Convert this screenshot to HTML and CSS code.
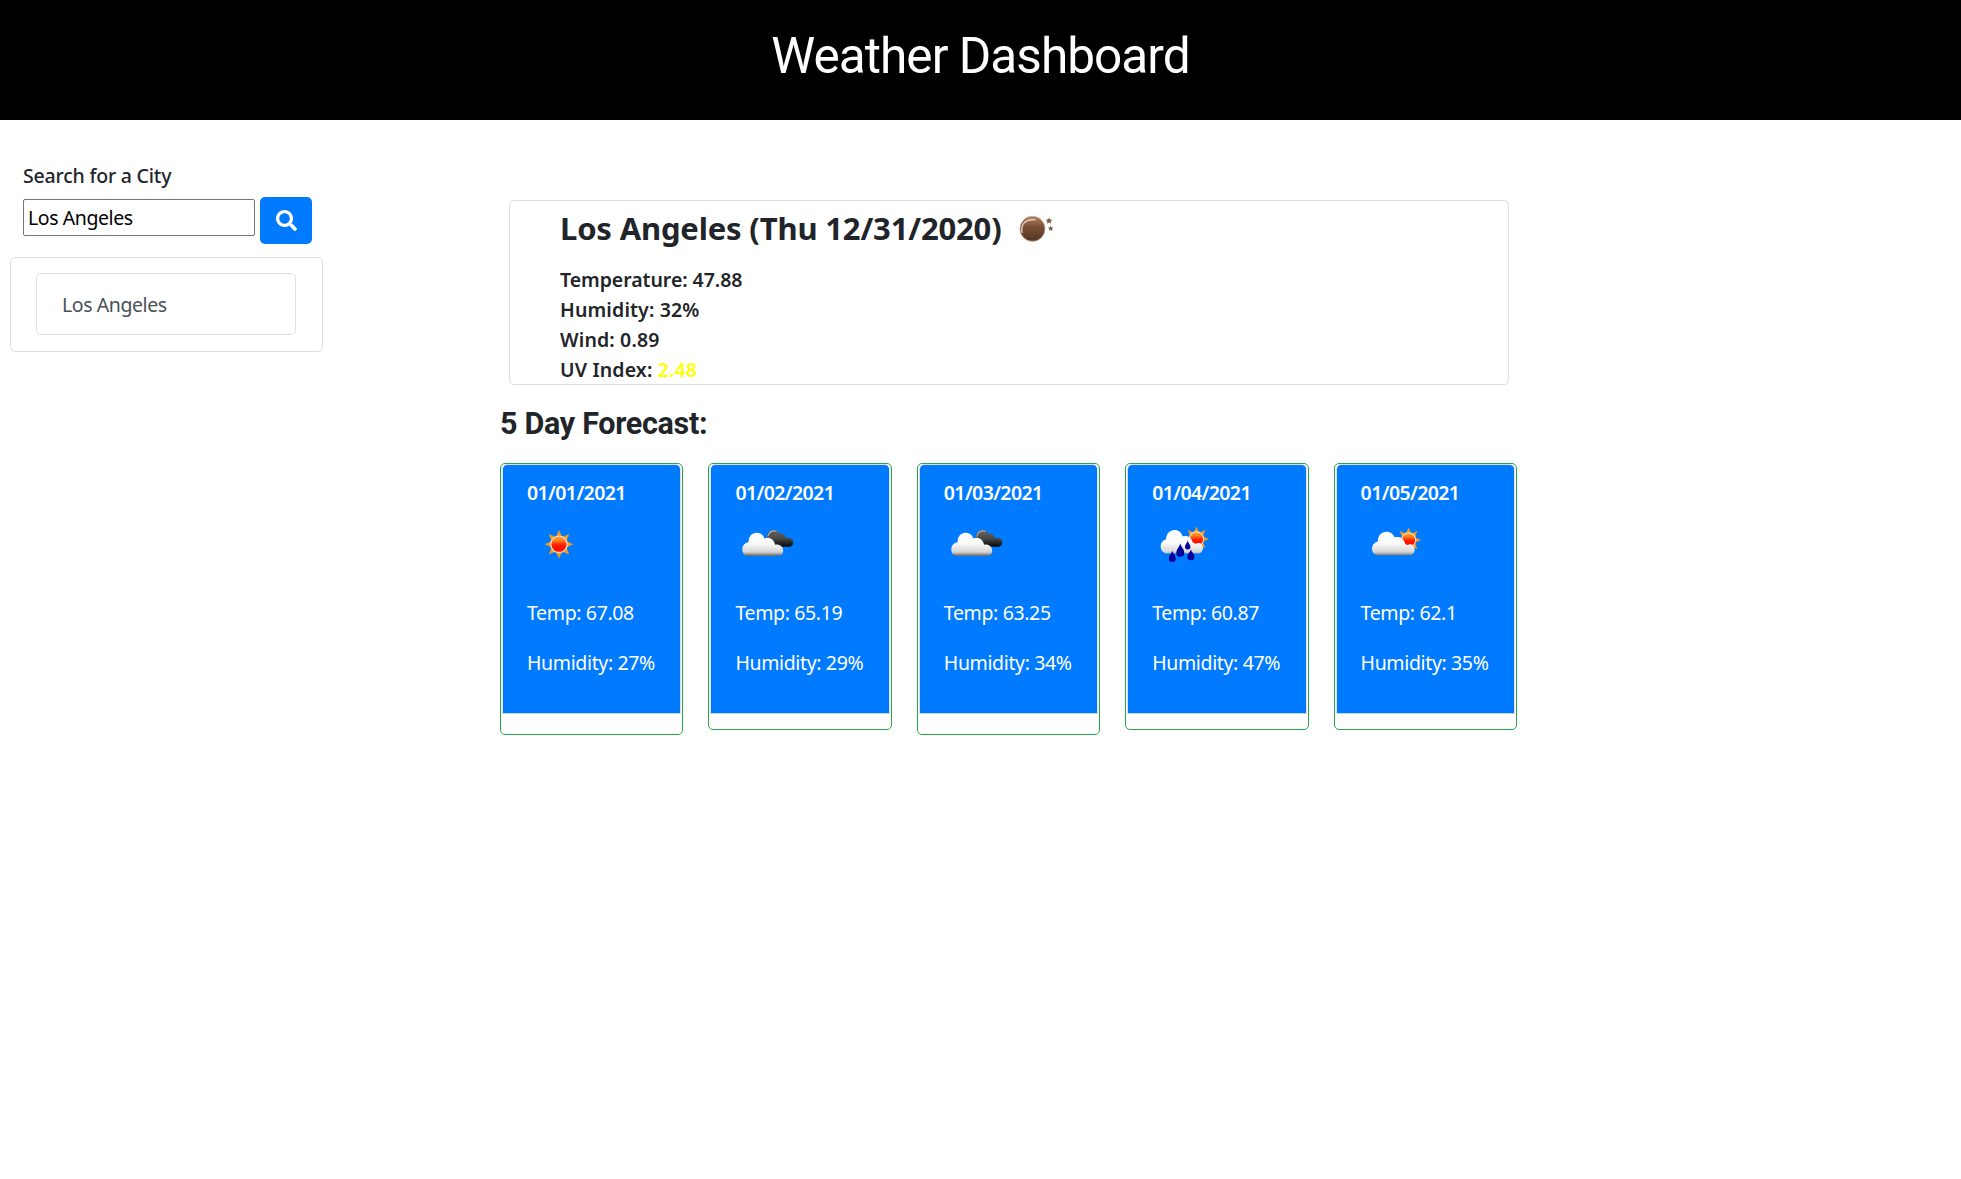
FILE: index.html
```html
<!DOCTYPE html>
<html lang="en">
<head>
<meta charset="utf-8">
<title>Weather Dashboard</title>
<link rel="stylesheet" href="styles.css">
</head>
<body>
<svg class="defs" aria-hidden="true">
  <defs>
    <linearGradient id="sun" x1="0" y1="0" x2="0" y2="1"><stop offset="0" stop-color="#ffa51e"/><stop offset=".25" stop-color="#ff8420"/><stop offset=".55" stop-color="#ff1a00"/><stop offset="1" stop-color="#ff0d00"/></linearGradient>
    <linearGradient id="cloud" gradientUnits="userSpaceOnUse" x1="0" y1="18" x2="0" y2="43"><stop offset="0" stop-color="#fff"/><stop offset=".5" stop-color="#fafafa"/><stop offset=".84" stop-color="#d5d5d5"/><stop offset="1" stop-color="#666"/></linearGradient>
    <linearGradient id="dark" gradientUnits="userSpaceOnUse" x1="0" y1="17" x2="0" y2="34"><stop offset="0" stop-color="#666"/><stop offset=".5" stop-color="#484848"/><stop offset="1" stop-color="#050505"/></linearGradient>
    <linearGradient id="moon" x1="0" y1="0" x2="0" y2="1"><stop offset="0" stop-color="#b57e5b"/><stop offset=".4" stop-color="#795136"/><stop offset="1" stop-color="#523624"/></linearGradient>
    <linearGradient id="drop" x1="0" y1="0" x2="1" y2="0"><stop offset="0" stop-color="#000068"/><stop offset=".5" stop-color="#0000bd"/><stop offset="1" stop-color="#000068"/></linearGradient>
    <symbol id="sunshape" viewBox="-15 -15 30 30">
      <path fill="#f39a1e" d="M0-14.3 3-7.6-3-7.6ZM0 14.3 3 7.6-3 7.6ZM-14.3 0-7.6 3-7.6-3ZM14.3 0 7.6 3 7.6-3ZM-10.3-10.3-7.4-3.4-3.4-7.4ZM10.3-10.3 7.4-3.4 3.4-7.4ZM-10.3 10.3-7.4 3.4-3.4 7.4ZM10.3 10.3 7.4 3.4 3.4 7.4Z"/>
      <circle r="8.2" fill="url(#sun)" stroke="#fbd9b4" stroke-width="1.3"/>
    </symbol>
    <symbol id="clouds" viewBox="0 0 62 62">
      <path fill="url(#dark)" d="M31 26C30 20 34 17 37.500 17 41 17 43 19 43.300 20.500 46.500 19.500 49.500 22 49.500 25 54 24 57.300 26.500 57.300 29.500 57.300 32 55.500 33.800 53 33.800H37Z"/>
      <path fill="none" stroke="#aaa" stroke-width="1.300" d="M32 23.500C32.500 19 36.500 16.800 40.500 18.300"/>
      <path fill="url(#cloud)" d="M12 43C8.500 43 6.300 40.500 6.300 36.500 6.300 32.500 9 29.500 12.500 29.200 12.500 23.500 16 19.700 20.500 19.700 24.500 19.700 27.500 22 28.300 25.500 32.500 23.500 38 26 39 31.700 43.500 31 47.200 33.500 47.200 37.500 47.200 41 45 43 42 43Z"/>
    </symbol>
  </defs>
</svg>
<header class="banner"><h1>Weather Dashboard</h1></header>
<div class="layout">
  <aside class="sidebar">
    <div class="search">
      <label class="search-label" for="city">Search for a City</label>
      <div class="search-row">
        <input class="search-input" id="city" type="text" value="Los Angeles">
        <button class="search-button" type="button" aria-label="Search"><svg width="21" height="21" viewBox="0 0 512 512"><path fill="#fff" d="M505 442.700 405.300 343c-4.500-4.500-10.600-7-17-7H372c27.600-35.300 44-79.700 44-128C416 93.100 322.900 0 208 0S0 93.100 0 208s93.100 208 208 208c48.300 0 92.700-16.400 128-44v16.300c0 6.400 2.500 12.500 7 17l99.700 99.700c9.400 9.400 24.600 9.400 33.900 0l28.300-28.300c9.400-9.400 9.400-24.600.1-34zM208 336c-70.700 0-128-57.200-128-128 0-70.700 57.200-128 128-128 70.700 0 128 57.200 128 128 0 70.700-57.200 128-128 128z"/></svg></button>
      </div>
    </div>
    <div class="history"><div class="history-item">Los Angeles</div></div>
  </aside>
  <main class="content">
    <section class="current">
      <h2 class="current-title">Los Angeles (Thu 12/31/2020)<svg class="moon" width="62" height="40" viewBox="0 0 62 40"><circle cx="31.500" cy="20.800" r="12.500" fill="url(#moon)" stroke="#c8a58e" stroke-width=".7"/><path d="M21.300 24.800C19 15.800 25.500 10.300 34.500 11.800" fill="none" stroke="#ead9ce" stroke-width="1.300"/><path fill="#805a43" d="m48 9.500 1 2.100 2.300.2-1.700 1.600.5 2.300-2.100-1.200-2.100 1.200.5-2.300-1.700-1.600 2.300-.2zM49.700 17.600l.8 1.800 2 .2-1.500 1.400.4 2-1.700-1-1.700 1 .4-2-1.500-1.400 2-.2z"/></svg></h2>
      <p class="temperature">Temperature: 47.88</p>
      <p>Humidity: 32%</p>
      <p>Wind: 0.89</p>
      <p>UV Index: <span class="uv">2.48</span></p>
    </section>
    <h2 class="forecast-title">5 Day Forecast:</h2>
    <section class="forecast">
      <article class="day day-tall"><div class="day-body"><h3>01/01/2021</h3>
        <svg class="icon" viewBox="0 0 62 62"><use href="#sunshape" x="16" y="16.300" width="30" height="30"/></svg>
        <p>Temp: 67.08</p><p>Humidity: 27%</p></div></article>
      <article class="day"><div class="day-body"><h3>01/02/2021</h3>
        <svg class="icon" viewBox="0 0 62 62"><use href="#clouds" width="62" height="62"/></svg>
        <p>Temp: 65.19</p><p>Humidity: 29%</p></div></article>
      <article class="day day-tall"><div class="day-body"><h3>01/03/2021</h3>
        <svg class="icon" viewBox="0 0 62 62"><use href="#clouds" width="62" height="62"/></svg>
        <p>Temp: 63.25</p><p>Humidity: 34%</p></div></article>
      <article class="day"><div class="day-body"><h3>01/04/2021</h3>
        <svg class="icon" viewBox="0 0 62 62"><use href="#sunshape" x="30.500" y="13" width="26" height="26"/>
          <path fill="url(#cloud)" d="M13.500 40.500C10 40 7.700 37.200 7.700 33.500 7.700 29.500 10 27 13 26.500 13.300 20.500 17 17 21.500 17 25.500 17 28.700 19.500 29.500 23.500 34 22 38.500 24 39.500 29 41 30.300 42.500 31 44 30.500 47 29 50 31.500 50 35 50 38.500 47.500 40.500 44.500 40.500Z"/>
          <path fill="url(#drop)" d="M19.300 37.800C20 40.500 22.800 42.500 22.800 45.500A3.500 3.500 0 0 1 15.800 45.500C15.800 42.500 18.600 40.500 19.300 37.800Z"/>
          <path fill="url(#drop)" d="M27.300 30.800C28.300 34 31.300 36.500 31.300 39.700A4 4 0 0 1 23.300 39.700C23.300 36.500 26.300 34 27.300 30.800Z"/>
          <path fill="url(#drop)" d="M34.700 27.500C35.200 30 37.400 31.500 37.400 33.700A2.700 2.700 0 0 1 32 33.700C32 31.500 34.200 30 34.700 27.500Z"/>
          <path fill="url(#drop)" d="M37.900 36.500C38.600 39.200 41.400 41 41.400 43.800A3.500 3.500 0 0 1 34.400 43.800C34.400 41 37.200 39.200 37.900 36.500Z"/></svg>
        <p>Temp: 60.87</p><p>Humidity: 47%</p></div></article>
      <article class="day"><div class="day-body"><h3>01/05/2021</h3>
        <svg class="icon" viewBox="0 0 62 62"><use href="#sunshape" x="33.600" y="14" width="26" height="26"/>
          <path fill="url(#cloud)" d="M16 42.300C12.500 42.300 10 39.500 10 35.700 10 32 12.300 29.300 15.700 28.500 16 22.300 19.500 18.700 24.500 18.700 28.500 18.700 31.500 21 32.700 24.500 37.500 23 42 25.500 43 30.500 44.200 32 45.500 32.300 47 31.500 50 30.500 52.700 33 52.700 36.500 52.700 40 50.300 42.300 47 42.300Z"/></svg>
        <p>Temp: 62.1</p><p>Humidity: 35%</p></div></article>
    </section>
  </main>
</div>
</body>
</html>
```
FILE: styles.css
```css
* { box-sizing: border-box; }
body { margin: 0; background: #fff; color: #212529; font: 19.5px/30px "Noto Sans", sans-serif; letter-spacing: -.42px; }
h1, h2, h3, p { margin: 0; }
.defs { position: absolute; width: 0; height: 0; }
.banner { height: 120px; padding-top: 26px; background: #000; color: #fff; text-align: center; }
.banner h1 { font: 400 49.5px/60px Roboto, sans-serif; letter-spacing: -.95px; }
.layout { display: flex; }
.sidebar { width: 313px; margin-left: 10px; padding-top: 41px; }
.search { padding-left: 13px; }
.search-label { display: block; font-weight: 500; letter-spacing: -.2px; }
.search-row { display: flex; align-items: flex-start; gap: 5px; padding-top: 6px; }
.search-input { width: 232px; height: 37px; margin-top: 2px; padding: 1px 4px; border: 1px solid #767676; border-radius: 2px; font: inherit; letter-spacing: inherit; color: #000; }
.search-button { display: flex; align-items: center; justify-content: center; width: 52px; height: 47px; padding: 0; border: 0; border-radius: 5px; background: #007bff; }
.history { height: 95px; margin-top: 13px; padding: 15px 26px 0 25px; border: 1px solid #dfdfdf; border-radius: 5px; }
.history-item { height: 62px; padding: 16px 25px; border: 1px solid #dfdfdf; border-radius: 5px; color: #495057; }
.content { width: 1017px; margin-left: 177px; padding-top: 80px; }
.current { width: 1000px; height: 185px; margin-left: 9px; padding: 7px 0 0 50px; border: 1px solid #dfdfdf; border-radius: 5px; font-weight: 600; letter-spacing: .15px; }
.temperature { letter-spacing: -.05px; }
.current-title { display: flex; align-items: center; height: 40px; margin-bottom: 17px; font: 700 31px/40px "Noto Sans", sans-serif; letter-spacing: -.17px; }
.current-title .moon { display: block; }
.uv { color: #ff0; }
.forecast-title { margin: 19px 0; font: 700 30.5px/40px Roboto, sans-serif; letter-spacing: -.3px; }
.forecast { display: grid; grid-template-columns: repeat(5, 1fr); gap: 25px; align-items: start; }
.day { height: 267px; padding: 0 1px; border: 1px solid #28a745; border-radius: 5px; }
.day-tall { height: 272px; }
.day-body { height: 250px; padding: 13px 0 0 24px; border: 1px solid #dfdfdf; border-bottom-color: #bcd9fa; border-radius: 5px 5px 1px 1px; background: #007bff; background-clip: padding-box; color: #fff; }
.day h3 { font-size: 19.5px; font-weight: 600; line-height: 30px; letter-spacing: -.6px; }
.icon { display: block; width: 62px; height: 62px; margin: 5px 0 23px 1px; }
.day p { margin-bottom: 20px; letter-spacing: -.36px; }
```
